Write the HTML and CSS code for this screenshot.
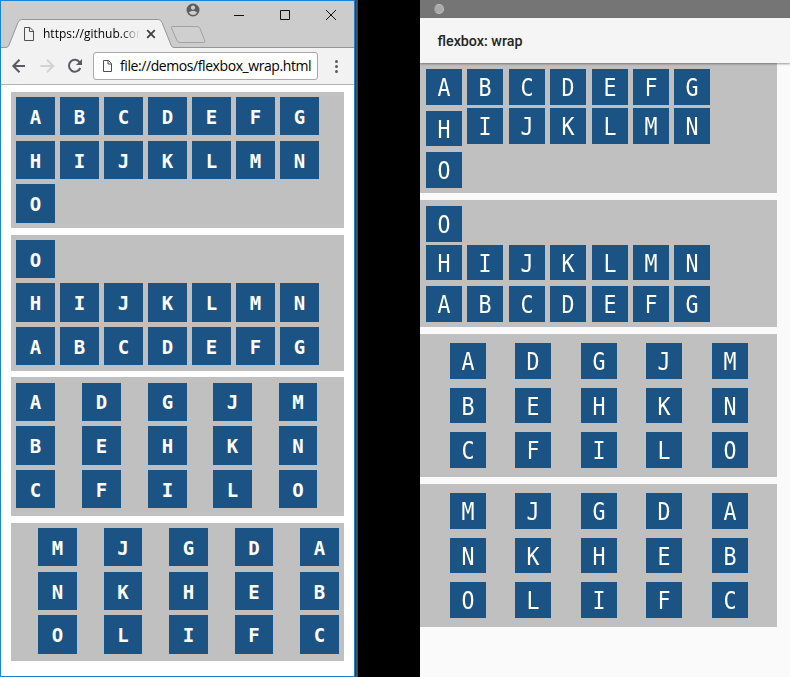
FILE: index.html
```
<!DOCTYPE html>
<html lang="en">
<head>
<meta charset="utf-8">
<title>flexbox: wrap</title>
<link rel="stylesheet" href="styles.css">
</head>
<body>
<main class="screen">
  <section class="browser">
    <header class="tabs">
      <svg class="chrome-art" width="353" height="47" viewBox="1 1 353 47" fill="none">
        <path d="M1 47.5H6.5Q8 47.5 9 45L18 22.500Q19.500 19.500 21.500 19.500H158.500Q160.500 19.500 162 22.500L171 45Q172 47.500 174 47.500V49H1Z" fill="#f2f2f2"/>
        <path d="M1 47.500H6Q8 47.500 9 45L18 22.500Q19.500 19.500 21.500 19.500H158.500Q160.500 19.500 162 22.500L171 45Q172 47.500 174 47.500H355" stroke="#969696"/>
        <path d="M172.500 26.500H197Q199 26.500 200 28.500L204.500 40Q205.500 42.500 204 42.500H180Q178 42.500 177 40.500L171.500 28Q171 26.500 172.500 26.500Z" fill="#cfcfcf" stroke="#a2a2a2"/>
        <path d="M24.500 27.500H30L33.500 31V40.500H24.500ZM29.500 27.500V31.500H33.500" stroke="#505050"/>
        <path d="M147.200 30.200L154.800 37.800M154.800 30.200L147.200 37.800" stroke="#404040" stroke-width="1.800"/>
        <circle cx="193" cy="10" r="6.500" fill="#5d5d5d"/>
        <circle cx="193" cy="7.700" r="2.100" fill="#ccc"/>
        <path d="M188.800 12.500Q193 9.200 197.200 12.500Q195.500 15 193 15Q190.500 15 188.800 12.500Z" fill="#ccc"/>
        <path d="M234 15.500H244M280.500 10.500H289.500V19.500H280.500ZM326 10L336 20M336 10L326 20" stroke="#111"/>
      </svg>
      <span class="tab-title">https://github.com</span>
    </header>
    <div class="toolbar">
      <svg width="80" height="36" viewBox="0 0 80 36" fill="none">
        <path d="M25 18H13M19.500 11.800L13.300 18L19.500 24.200" stroke="#5a5a5f" stroke-width="2"/>
        <path d="M40.500 18H52.500M47 11.800L53.200 18L47 24.200" stroke="#d2d2d2" stroke-width="2"/>
        <path d="M79.800 14.500A5.900 5.900 0 1 0 80.300 20" stroke="#5a5a5f" stroke-width="2"/>
        <path d="M82 11V17H76Z" fill="#5a5a5f"/>
      </svg>
      <div class="address">
        <svg width="9" height="13" viewBox="0 0 9 13" fill="none"><path d="M.5.5H5.500L8.500 3.500V11.500H.5ZM5 .5V4H8.500" stroke="#505050"/></svg>
        <span>file://demos/flexbox_wrap.html</span>
      </div>
      <div class="menu"><i></i><i></i><i></i></div>
    </div>
    <div class="page">
      <div class="panel rows"><b>A</b><b>B</b><b>C</b><b>D</b><b>E</b><b>F</b><b>G</b><b>H</b><b>I</b><b>J</b><b>K</b><b>L</b><b>M</b><b>N</b><b>O</b></div>
      <div class="panel rows-reverse"><b>O</b><b class="line-start">H</b><b>I</b><b>J</b><b>K</b><b>L</b><b>M</b><b>N</b><b>A</b><b>B</b><b>C</b><b>D</b><b>E</b><b>F</b><b>G</b></div>
      <div class="panel columns"><b>A</b><b>B</b><b>C</b><b>D</b><b>E</b><b>F</b><b>G</b><b>H</b><b>I</b><b>J</b><b>K</b><b>L</b><b>M</b><b>N</b><b>O</b></div>
      <div class="panel columns-reverse"><b>M</b><b>N</b><b>O</b><b>J</b><b>K</b><b>L</b><b>G</b><b>H</b><b>I</b><b>D</b><b>E</b><b>F</b><b>A</b><b>B</b><b>C</b></div>
    </div>
  </section>
  <div class="edge"></div>
  <section class="phone">
    <div class="status"><i></i></div>
    <header class="appbar">flexbox: wrap</header>
    <div class="content">
      <div class="view v-rows"><b>A</b><b>B</b><b>C</b><b>D</b><b>E</b><b>F</b><b>G</b><b class="lowered">H</b><b>I</b><b>J</b><b>K</b><b>L</b><b>M</b><b>N</b><b>O</b></div>
      <div class="view v-rows-reverse"><b>O</b><b class="line-start">H</b><b>I</b><b>J</b><b>K</b><b>L</b><b>M</b><b>N</b><b>A</b><b>B</b><b>C</b><b>D</b><b>E</b><b>F</b><b>G</b></div>
      <div class="view v-columns"><b>A</b><b>B</b><b>C</b><b>D</b><b>E</b><b>F</b><b>G</b><b>H</b><b>I</b><b>J</b><b>K</b><b>L</b><b>M</b><b>N</b><b>O</b></div>
      <div class="view v-columns v-last"><b>M</b><b>N</b><b>O</b><b>J</b><b>K</b><b>L</b><b>G</b><b>H</b><b>I</b><b>D</b><b>E</b><b>F</b><b>A</b><b>B</b><b>C</b></div>
    </div>
  </section>
</main>
</body>
</html>
```
FILE: styles.css
```
* { box-sizing: border-box; }
body { margin: 0; background: #000; overflow: hidden; }
.screen { display: flex; width: 790px; height: 677px; }

/* Desktop browser window */
.browser {
  width: 355px;
  border: 1px solid #1a82d8;
  background: #fff;
  display: flex;
  flex-direction: column;
}
.tabs { position: relative; height: 47px; background: #ccc; }
.chrome-art { display: block; }
.tab-title {
  position: absolute;
  left: 42px;
  top: 24px;
  width: 97px;
  overflow: hidden;
  white-space: nowrap;
  font: 12px/18px "Open Sans", sans-serif;
  color: #000;
  -webkit-mask-image: linear-gradient(90deg, #000 80%, transparent);
  mask-image: linear-gradient(90deg, #000 80%, transparent);
}
.toolbar {
  display: flex;
  align-items: center;
  height: 37px;
  background: #f2f2f2;
  border-bottom: 1px solid #b4b4b4;
}
.toolbar > svg { margin-left: -1px; overflow: visible; }
.address {
  display: flex;
  align-items: center;
  gap: 8px;
  width: 225px;
  height: 28px;
  margin-left: 13px;
  padding-left: 9px;
  background: #fff;
  border: 1px solid #a9a9a9;
  border-radius: 3px;
  font: 14px/24px "Open Sans", sans-serif;
  letter-spacing: -0.42px;
  color: #000;
  white-space: nowrap;
}
.menu { display: flex; flex-direction: column; gap: 2px; margin-left: 17px; }
.menu i { width: 3px; height: 3px; border-radius: 50%; background: #5a5a5a; }

.page { padding: 7px 10px; }
.panel {
  display: grid;
  width: 333px;
  background: #c0c0c0;
  font: bold 19px/38px "DejaVu Sans Mono", monospace;
}
.panel b, .view b { background: #1c5385; color: #fff; text-align: center; }
.panel b { padding-top: 1px; line-height: 39px; overflow: hidden; }
.line-start { grid-column: 1; }
.rows, .rows-reverse {
  grid-template-columns: repeat(7, 39px);
  column-gap: 5px;
  padding: 5px;
  height: 136px;
}
.rows { grid-template-rows: 44px 43px 39px; }
.rows b { height: 38px; }
.rows b:last-child { height: 39px; }
.rows-reverse { grid-template-rows: 43px 44px 38px; margin-top: 7px; }
.rows-reverse b { height: 38px; }
.rows-reverse b:nth-child(n+2):nth-child(-n+8) { height: 39px; }
.columns, .columns-reverse { grid-auto-flow: column; }
.columns {
  grid-template-rows: 38px 39px 38px;
  grid-template-columns: 39px 39px 39px 39px 38px;
  gap: 5px 27px;
  padding: 6px 5px;
  height: 139px;
  margin-top: 6px;
}
.columns b:nth-child(3n+1) { padding-top: 0; line-height: 38px; }
.columns b:nth-child(n+10) { margin-left: -1px; margin-right: 1px; }
.columns b:nth-child(n+13) { margin-right: 1px; width: 38px; }

.columns-reverse {
  grid-template-rows: 44px 43px 39px;
  grid-template-columns: 66px 65px 66px 65px 39px;
  padding: 5px 5px 5px 27px;
  height: 138px;
  margin-top: 7px;
}
.columns-reverse b { width: 39px; height: 38px; }
.columns-reverse b:nth-child(3n) { height: 39px; }
.columns-reverse b:nth-child(n+4):nth-child(-n+6),
.columns-reverse b:nth-child(n+10):nth-child(-n+12) { width: 38px; }

.edge { width: 3px; background: linear-gradient(90deg, #333, #555 60%, #333); }

/* Mobile screen */
.phone { margin-left: 62px; width: 370px; background: #fafafa; }
.status { height: 18px; padding: 4px 0 0 14px; background: #757575; }
.status i { display: block; width: 10px; height: 10px; border-radius: 50%; background: #aaa; border: 1px solid #c0c0c0; border-left-color: #999; }
.appbar {
  position: relative;
  z-index: 1;
  height: 45px;
  padding-left: 17.5px;
  background: #f5f5f5;
  box-shadow: 0 1px 2px rgba(0, 0, 0, .4);
  font: 500 14.3px/47px Roboto, sans-serif;
  color: #242424;
}
.view {
  display: grid;
  width: 357px;
  background: #c0c0c0;
  font: 24px/36px "DejaVu Sans Mono", monospace;
}
/* Tiles are laid out 40px wide and condensed to 36px, which narrows the letters */
.view b {
  width: 40px;
  height: 35.5px;
  margin-left: -2px;
  padding-top: 1px;
  font-weight: normal;
  line-height: 36px;
  transform: scaleX(.9);
}
.v-rows, .v-rows-reverse { grid-template-columns: repeat(7, 41.4px); padding-left: 6px; }
.v-rows { height: 130px; padding-top: 6px; grid-template-rows: 39px 44px 36px; }
.v-rows .lowered { margin-top: 2.5px; }
.v-rows-reverse { height: 127px; margin-top: 7px; padding-top: 6px; grid-template-rows: 38.500px 41.500px 36px; }
.v-columns {
  height: 142.500px;
  margin-top: 7px;
  padding: 9px 0 0 30px;
  grid-auto-flow: column;
  grid-template-rows: 44.500px 44.500px 36px;
  grid-template-columns: repeat(5, 65.400px);
}
.v-last { margin-top: 7.500px; }
```
